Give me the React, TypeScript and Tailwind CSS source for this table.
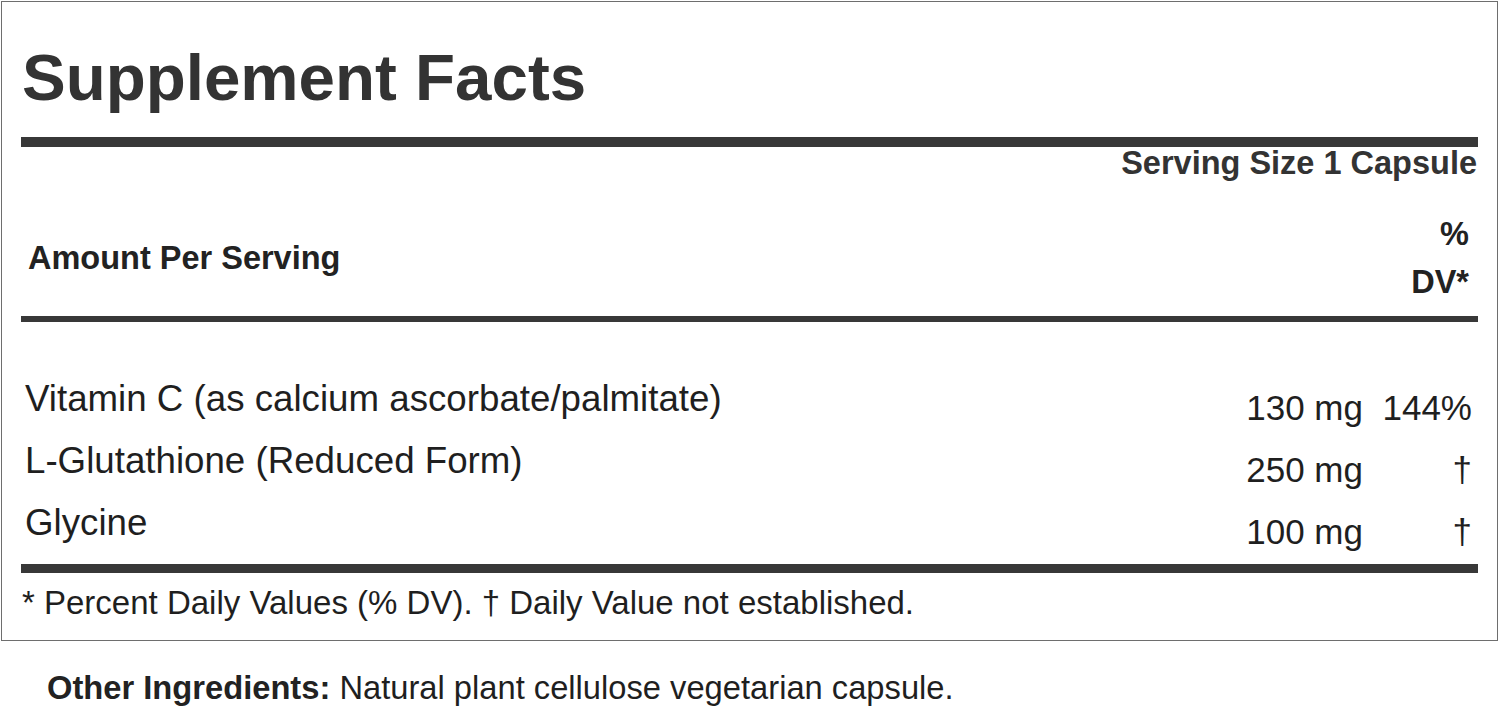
import React from "react";

const rows = [
  { name: "Vitamin C (as calcium ascorbate/palmitate)", amount: "130 mg", dv: "144%" },
  { name: "L-Glutathione (Reduced Form)", amount: "250 mg", dv: "†" },
  { name: "Glycine", amount: "100 mg", dv: "†" },
];

export default function App() {
  return (
    <div
      className="w-[1500px] h-[708px] bg-white overflow-hidden"
      style={{ fontFamily: '"Liberation Sans", Arial, Helvetica, sans-serif' }}
    >
      <div className="ml-[1px] mt-[1px] w-[1497px] h-[640px] border border-[#6e6e6e] px-[19px]">
        <h1 className="mt-[43px] text-[65.5px] leading-[65px] font-bold text-[#333333] pl-[1px]">
          Supplement Facts
        </h1>
        <div className="mt-[27px] h-[10px] bg-[#383838]" />
        <div className="text-right text-[32.5px] leading-[32px] font-bold text-[#333333] pr-[1px]">
          Serving Size 1 Capsule
        </div>
        <div className="mt-[31px] flex items-center justify-between text-[32.5px] font-bold text-[#222222]">
          <div className="pl-[7px] leading-[40px]">Amount Per Serving</div>
          <div className="pr-[9px] text-right leading-[48px]">
            <div>%</div>
            <div>DV*</div>
          </div>
        </div>
        <div className="mt-[10px] h-[6px] bg-[#383838]" />
        <div className="mt-[46px]">
          {rows.map((r) => (
            <div key={r.name} className="flex h-[62px] text-[#1f1f1f]">
              <div className="flex-1 pl-[4px] text-[36.7px] leading-[62px] whitespace-nowrap">{r.name}</div>
              <div className="pt-[9px] text-[35px] leading-[62px] text-right whitespace-nowrap">{r.amount}</div>
              <div className="w-[115px] pt-[9px] pr-[6px] text-[35px] leading-[62px] text-right">{r.dv}</div>
            </div>
          ))}
        </div>
        <div className="mt-[10px] h-[9px] bg-[#383838]" />
        <div className="mt-[10px] pl-[1px] text-[33px] leading-[40px] text-[#1f1f1f] whitespace-nowrap">
          * Percent Daily Values (% DV). † Daily Value not established.
        </div>
      </div>
      <div className="mt-[27px] pl-[47px] text-[32.7px] leading-[40px] text-[#1f1f1f] whitespace-nowrap">
        <span className="font-bold text-[#222222]">Other Ingredients:</span> Natural plant cellulose vegetarian capsule.
      </div>
    </div>
  );
}
